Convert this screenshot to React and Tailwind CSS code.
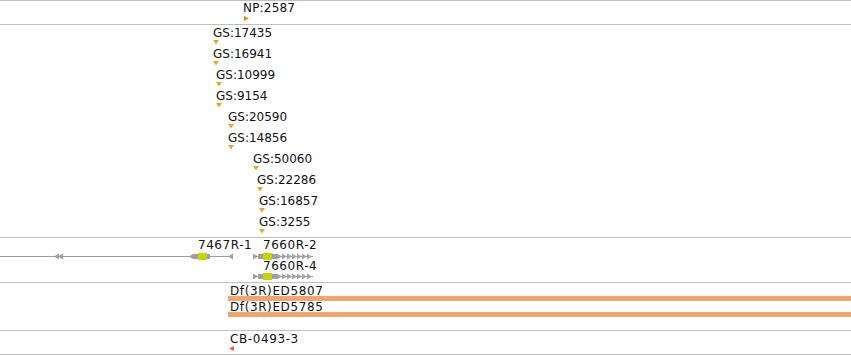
import React from "react";

const gsRows = [
  { t: "GS:17435", c: "ml-[213px]" },
  { t: "GS:16941", c: "ml-[213px]" },
  { t: "GS:10999", c: "ml-[216px]" },
  { t: "GS:9154", c: "ml-[216px]" },
  { t: "GS:20590", c: "ml-[228px]" },
  { t: "GS:14856", c: "ml-[228px]" },
  { t: "GS:50060", c: "ml-[253px]" },
  { t: "GS:22286", c: "ml-[257px]" },
  { t: "GS:16857", c: "ml-[259px]" },
  { t: "GS:3255", c: "ml-[259px]" },
];

const Line = () => <div className="h-px bg-[#c0c0c0]" />;

function ForwardGene({ y }) {
  const arrows = [277, 282, 287, 292, 297, 302, 307];
  return (
    <g>
      <line x1="253" y1={y} x2="313" y2={y} stroke="#9c9c9c" strokeWidth="1" />
      <polygon points={`253,${y - 3} 258,${y} 253,${y + 3}`} fill="#a0a0a0" />
      <rect x="258" y={y - 2.5} width="5" height="5" fill="#a0a0a0" />
      <rect x="263" y={y - 3.5} width="9" height="7" fill="#c5d40a" />
      <rect x="272" y={y - 2.5} width="5" height="5" fill="#a0a0a0" />
      {arrows.map((x) => (
        <polygon key={x} points={`${x},${y - 3} ${x + 5},${y} ${x},${y + 3}`} fill="#a4a4a4" />
      ))}
    </g>
  );
}

export default function App() {
  return (
    <div className="w-[851px] h-[355px] overflow-hidden bg-white text-[#111] font-['DejaVu_Sans',sans-serif] text-[12px] leading-[14px]">
      <Line />
      {/* NP track */}
      <div className="h-[23px] flex flex-col pl-[243px]">
        <div className="tracking-[0.2px]">NP:2587</div>
        <svg width="6" height="6" className="mt-px ml-px">
          <polygon points="0,0 5,2.5 0,5" fill="#d4920c" />
        </svg>
      </div>
      <Line />
      {/* GS track */}
      <div className="h-[212px] pt-px flex flex-col">
        {gsRows.map((r) => (
          <div key={r.t} className={`flex flex-col h-[21px] ${r.c}`}>
            <div className="h-[14px]">{r.t}</div>
            <svg width="7" height="5">
              <polygon points="0,0 6,0 3,4.5" fill="#f0a426" />
            </svg>
          </div>
        ))}
      </div>
      <Line />
      {/* Gene track */}
      <div className="h-[44px] relative tracking-[0.55px]">
        <svg width="851" height="44" className="absolute left-0 top-0">
          <line x1="0" y1="18.5" x2="229" y2="18.5" stroke="#9c9c9c" strokeWidth="1" />
          <polygon points="54,18.5 59,15.5 59,21.5" fill="#a0a0a0" />
          <polygon points="58,18.5 63,15.5 63,21.5" fill="#a0a0a0" />
          <polygon points="189,18.5 193,16 193,21" fill="#a0a0a0" />
          <rect x="193" y="16" width="5" height="5" fill="#a0a0a0" />
          <rect x="198" y="15" width="9" height="7" fill="#c5d40a" />
          <rect x="207" y="16" width="3" height="5" fill="#a0a0a0" />
          <polygon points="228,18.5 233,15.5 233,21.5" fill="#a0a0a0" />
          <ForwardGene y={18.5} />
          <ForwardGene y={38.5} />
        </svg>
        <span className="absolute left-[198px] top-0">7467R-1</span>
        <span className="absolute left-[263px] top-0">7660R-2</span>
        <span className="absolute left-[263px] top-[21px]">7660R-4</span>
      </div>
      <Line />
      {/* Df track */}
      <div className="h-[47px] pt-[2px] flex flex-col tracking-[0.6px]">
        <div className="h-[11px] leading-[12px] pl-[230px]">Df(3R)ED5807</div>
        <div className="h-[5px] ml-[228px] bg-[#f4a46c]" />
        <div className="h-[11px] leading-[12px] pl-[230px]">Df(3R)ED5785</div>
        <div className="h-[5px] ml-[228px] bg-[#f4a46c]" />
      </div>
      <Line />
      {/* CB track */}
      <div className="h-[23px] pt-px flex flex-col pl-[229px]">
        <div className="h-[14px] pl-px tracking-[0.6px]">CB-0493-3</div>
        <svg width="6" height="5">
          <polygon points="0,2.5 5,0 5,5" fill="#f05a3a" />
        </svg>
      </div>
      <Line />
    </div>
  );
}
